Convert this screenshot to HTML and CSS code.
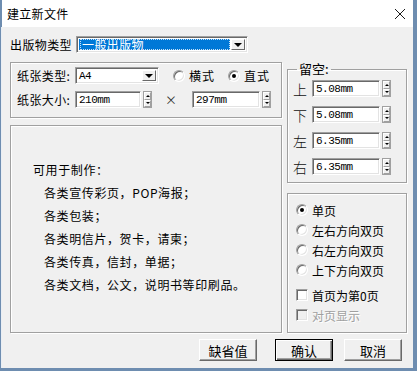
FILE: index.html
```html
<!DOCTYPE html>
<html>
  <head>
    <meta charset="utf-8">
    <title>建立新文件</title>
    <link rel="stylesheet" href="styles.css">
  </head>
  <body>
    <div class="window">
      <div class="titlebar">
        <span class="title">建立新文件</span>
        <svg class="close" width="12" height="12" viewBox="0 0 12 12">
          <path d="M1 1 L11 11 M11 1 L1 11" stroke="#1a1a1a" stroke-width="1" fill="none"/>
        </svg>
      </div>

      <div class="client">
        <div class="type-row">
          <label class="lbl">出版物类型</label>
          <div class="select type-select">
            <span class="sel-value hilite"><span class="focus">一般出版物</span></span>
            <span class="drop"></span>
          </div>
        </div>

        <div class="main">
          <div class="left">
            <div class="group paper">
              <div class="line">
                <label class="lbl">纸张类型:</label>
                <div class="select paper-select">
                  <span class="sel-value mono">A4</span>
                  <span class="drop"></span>
                </div>
                <span class="radio-item first"><span class="radio"></span>横式</span>
                <span class="radio-item"><span class="radio checked"></span>直式</span>
              </div>
              <div class="line">
                <label class="lbl">纸张大小:</label>
                <span class="edit w66 mono">210mm</span>
                <span class="spin"><i class="up"></i><i class="down"></i></span>
                <span class="times">×</span>
                <span class="edit w68 mono">297mm</span>
                <span class="spin"><i class="up"></i><i class="down"></i></span>
              </div>
            </div>

            <div class="group info">
              <p class="lead">可用于制作：</p>
              <p>各类宣传彩页，POP海报；</p>
              <p>各类包装；</p>
              <p>各类明信片，贺卡，请柬；</p>
              <p>各类传真，信封，单据；</p>
              <p>各类文档，公文，说明书等印刷品。</p>
            </div>
          </div>

          <div class="right">
            <fieldset class="group margins">
              <legend>留空:</legend>
              <div class="m-row">
                <span class="m-lbl">上</span>
                <span class="edit w68 mono">5.08mm</span>
                <span class="spin"><i class="up"></i><i class="down"></i></span>
              </div>
              <div class="m-row">
                <span class="m-lbl">下</span>
                <span class="edit w68 mono">5.08mm</span>
                <span class="spin"><i class="up"></i><i class="down"></i></span>
              </div>
              <div class="m-row">
                <span class="m-lbl">左</span>
                <span class="edit w68 mono">6.35mm</span>
                <span class="spin"><i class="up"></i><i class="down"></i></span>
              </div>
              <div class="m-row">
                <span class="m-lbl">右</span>
                <span class="edit w68 mono">6.35mm</span>
                <span class="spin"><i class="up"></i><i class="down"></i></span>
              </div>
            </fieldset>

            <div class="group pages">
              <div class="opt"><span class="radio checked"></span>单页</div>
              <div class="opt"><span class="radio"></span>左右方向双页</div>
              <div class="opt"><span class="radio"></span>右左方向双页</div>
              <div class="opt"><span class="radio"></span>上下方向双页</div>
              <div class="opt check-first"><span class="check"></span>首页为第0页</div>
              <div class="opt disabled"><span class="check"></span>对页显示</div>
            </div>
          </div>
        </div>

        <div class="buttons">
          <button class="btn defaults">缺省值</button>
          <button class="btn primary">确认</button>
          <button class="btn">取消</button>
        </div>
      </div>
    </div>
  </body>
</html>
```

FILE: styles.css
```css
* {
    box-sizing: border-box;
}
body {
    margin: 0;
    font-family: "Noto Sans CJK SC", "DejaVu Sans", sans-serif;
    font-size: 12px;
    color: #000;
    background: #6e8db0;
}
.window {
    width: 417px;
    height: 371px;
    display: flex;
    flex-direction: column;
    border-style: solid;
    border-color: #6e8db0;
    border-width: 0 4px 3px 2px;
    background: #f0f0f0;
}

/* title bar */
.titlebar {
    height: 27px;
    background: #fff;
    display: flex;
    align-items: center;
    justify-content: space-between;
    padding: 0 7px 0 5px;
    flex: none;
}
.title {
    font-size: 12px;
    letter-spacing: 0.3px;
}

/* client area */
.client {
    flex: 1;
    padding: 9px 8px 0 8px;
    border-left: 1px solid #e9eef4;
    margin-left: -1px;
}
.lbl {
    font-size: 12px;
    letter-spacing: 0.4px;
    white-space: nowrap;
}
.mono {
    font-family: "Liberation Mono", "DejaVu Sans Mono", monospace;
    font-size: 11px;
    letter-spacing: -0.5px;
}
.type-row {
    display: flex;
    align-items: center;
    height: 17px;
}
.type-row .lbl {
    width: 66px;
}

/* sunken controls */
.select, .edit {
    height: 17px;
    background: #fff;
    border: 1px solid;
    border-color: #a0a0a0 #fff #fff #a0a0a0;
    box-shadow: inset 1px 1px 0 #696969, inset -1px -1px 0 #e3e3e3;
    display: flex;
    align-items: center;
}
.select {
    padding: 2px;
}
.sel-value {
    flex: 1;
    height: 100%;
    display: flex;
    align-items: center;
    padding-left: 1px;
}
.hilite {
    background: #0078d7;
    color: #fff;
}
.focus {
    display: flex;
    align-items: center;
    height: 100%;
    width: 100%;
    outline: 1px dotted #c8e0f4;
    outline-offset: -1px;
    padding-left: 2px;
    letter-spacing: 0.4px;
}
.drop {
    width: 14px;
    height: 100%;
    margin-left: 1px;
    background: #f0f0f0;
    border: 1px solid;
    border-color: #fff #696969 #696969 #fff;
    display: flex;
    align-items: center;
    justify-content: center;
}
.drop::after {
    content: "";
    border-left: 4px solid transparent;
    border-right: 4px solid transparent;
    border-top: 4px solid #000;
}
.type-select {
    width: 172px;
}
.edit {
    padding-left: 3px;
}
.w66 { width: 66px; }
.w68 { width: 68px; }

/* spin buttons */
.spin {
    width: 9px;
    height: 17px;
    margin-left: 2px;
    display: flex;
    flex-direction: column;
    border: 1px solid #a0a0a0;
}
.spin i {
    flex: 1;
    background: #f0f0f0;
    border: 1px solid;
    border-color: #fff #a0a0a0 #a0a0a0 #fff;
    display: flex;
    align-items: center;
    justify-content: center;
}
.spin i::after {
    content: "";
    border-left: 2px solid transparent;
    border-right: 2px solid transparent;
}
.spin .up::after { border-bottom: 2px solid #000; }
.spin .down::after { border-top: 2px solid #000; }

/* main area */
.main {
    margin-top: 9px;
    display: grid;
    grid-template-columns: 272px 120px;
    column-gap: 5px;
    height: 271px;
}
.left, .right {
    display: flex;
    flex-direction: column;
}
.group {
    border: 1px solid #a0a0a0;
    box-shadow: 1px 1px 0 #fff, inset 1px 1px 0 #fff;
}

.paper {
    height: 56px;
    padding: 4px 0 0 6px;
    display: flex;
    flex-direction: column;
    gap: 7px;
}
.line {
    display: flex;
    align-items: center;
    height: 17px;
}
.line .lbl {
    width: 58px;
}
.paper-select {
    width: 84px;
}
.radio-item {
    display: flex;
    align-items: center;
    gap: 4px;
    margin-left: 13px;
    letter-spacing: 1px;
}
.radio-item.first {
    margin-left: 14px;
}
.times {
    margin: 0 15px 0 13px;
    color: #333;
}

.radio, .check {
    width: 12px;
    height: 12px;
    flex: none;
    background: #fff;
    border: 1px solid;
    border-color: #a0a0a0 #fff #fff #a0a0a0;
    box-shadow: inset 1px 1px 0 #696969, inset -1px -1px 0 #e3e3e3;
    display: flex;
    align-items: center;
    justify-content: center;
}
.radio {
    border-radius: 50%;
}
.radio.checked::after {
    content: "";
    width: 4px;
    height: 4px;
    border-radius: 50%;
    background: #000;
}

.info {
    margin-top: 7px;
    flex: 1;
    padding: 32px 0 0 22px;
}
.info p {
    margin: 0;
    height: 23px;
    line-height: 23px;
    padding-left: 11px;
    letter-spacing: 0.6px;
}
.info p.lead {
    padding-left: 0;
}

.margins {
    margin: 0;
    height: 121px;
    padding: 4px 0 0 3px;
    min-width: 0;
}
.margins legend {
    margin-left: 6px;
    padding: 0 2px;
    font-size: 13px;
    line-height: 14px;
}
.m-row {
    display: flex;
    align-items: center;
    height: 17px;
    margin-bottom: 9px;
}
.m-lbl {
    width: 18px;
    font-size: 14px;
    font-weight: 300;
    color: #111;
    text-align: center;
    margin-right: 3px;
}

.pages {
    margin-top: 10px;
    flex: 1;
    padding: 6px 0 0 8px;
}
.opt {
    display: flex;
    align-items: center;
    gap: 4px;
    height: 20px;
}
.opt.check-first {
    margin-top: 5px;
}
.disabled {
    color: #a0a0a0;
    text-shadow: 1px 1px 0 #fff;
}
.disabled .check {
    background: #f0f0f0;
}

/* buttons */
.buttons {
    margin-top: 6px;
    display: flex;
    justify-content: flex-end;
    padding-right: 3px;
    gap: 11px;
}
.btn {
    width: 58px;
    height: 22px;
    padding: 0;
    font-family: "Noto Sans CJK SC", sans-serif;
    font-size: 13px;
    background: #f0f0f0;
    border: 1px solid;
    border-color: #fff #696969 #696969 #fff;
    box-shadow: inset -1px -1px 0 #a0a0a0;
}
.btn.defaults {
    margin-right: 7px;
}
.btn.primary {
    border-color: #000;
    box-shadow: inset 1px 1px 0 #fff, inset -1px -1px 0 #696969, inset -2px -2px 0 #a0a0a0;
}
```
